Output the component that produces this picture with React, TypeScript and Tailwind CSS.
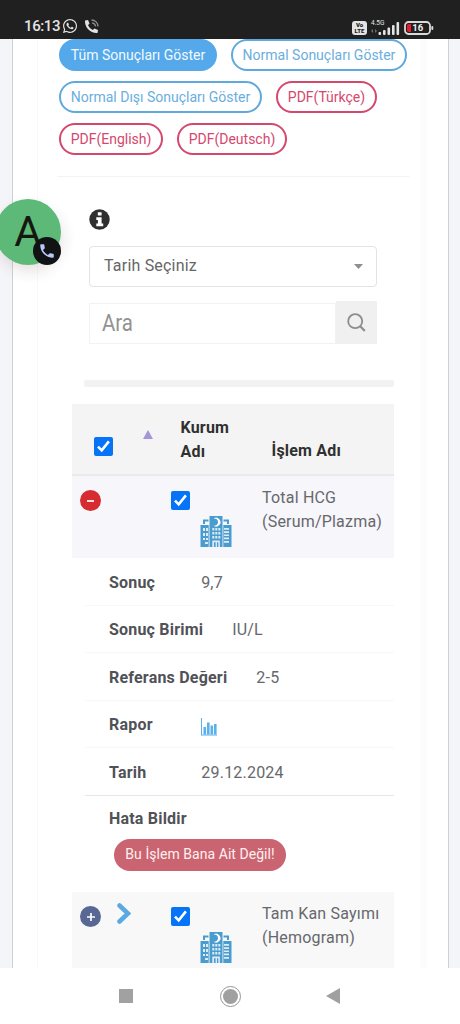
import type { ReactNode } from "react";
import { FaWhatsapp } from "react-icons/fa";
import { MdPhone } from "react-icons/md";

interface DetailRowProps {
  label: string;
  children: ReactNode;
  gap: string;
  divider?: string;
}

function StatusBar() {
  return (
    <header className="flex h-[39px] shrink-0 items-end bg-[#202020] pb-[5px] pr-[26px] pl-[24px] text-[#e4e4e4]">
      <span className="-mb-px w-[38px] text-[15px] leading-[18px] font-medium tracking-[-0.4px]">16:13</span>
      <FaWhatsapp className="size-4" />
      <svg className="ml-[6px] size-[15px]" viewBox="0 0 15 15">
        <path d="M1 1.500l3-.5 1.500 3.500L4 6.200a10 10 0 0 0 4.800 4.800l1.700-1.600 3.500 1.600-.5 3C6.500 14.500.5 8.500 1 1.500z" fill="#e4e4e4" />
        <path d="M7.500 1A6.500 6.500 0 0 1 14 7.500M8 3.800a4 4 0 0 1 3.600 3.600" fill="none" stroke="#8d8d8d" strokeWidth="1.300" />
      </svg>

      <div className="-mb-px ml-auto flex items-center">
        <div className="flex h-[14px] w-[15px] flex-col justify-center rounded-[3px] bg-[#e4e4e4] text-center text-[6px] leading-[6px] font-black text-[#202020]">
          <span>Vo</span>
          <span>LTE</span>
        </div>
        <svg className="-mt-[3px] ml-[3px] h-[16px] w-[30px]" viewBox="0 0 30 16" fill="#e4e4e4">
          <text x="1" y="5.500" fontSize="6.500" fontFamily="Roboto">4.5G</text>
          <path d="M1 12l2-2v4zM7 12l-2-2v4z" opacity=".4" />
          <rect x="8.500" y="13" width="2.600" height="3" rx="1" />
          <rect x="13" y="11" width="2.600" height="5" rx="1" />
          <rect x="17.500" y="8.500" width="2.600" height="7.500" rx="1" />
          <rect x="22" y="6" width="2.600" height="10" rx="1" />
          <rect x="26.500" y="3" width="2.600" height="13" rx="1" />
        </svg>
        <svg className="ml-[4px] h-[14px] w-[30px]" viewBox="0 0 30 14">
          <rect x="1" y="1" width="25" height="12" rx="3.5" fill="none" stroke="#d9d9d9" strokeWidth="1.8" />
          <path d="M5 3h2v8H5a2 2 0 0 1-2-2V5a2 2 0 0 1 2-2z" fill="#e51c2b" />
          <rect x="27.3" y="5" width="2" height="4" rx="1" fill="#d9d9d9" />
          <text x="8.2" y="10.4" fontSize="9.5" fontWeight="700" fontFamily="Roboto" fill="#f2f2f2">16</text>
        </svg>
      </div>
    </header>
  );
}

function FilterButtons() {
  const base = "flex h-8 items-center justify-center rounded-full border-2 text-[14px] whitespace-nowrap";
  const blue = "border-[#5fa9de] text-[#6aaee0]";
  const red = "border-[#d5486d] text-[#d5486d]";

  return (
    <div className="flex flex-wrap gap-x-[14px] gap-y-[10px] pl-[2px]">
      <button className={`${base} w-[158px] border-[#55a9ea] bg-[#55a9ea] text-[#f2f9ff]`}>Tüm Sonuçları Göster</button>
      <button className={`${base} ${blue} w-[176px]`}>Normal Sonuçları Göster</button>
      <button className={`${base} ${blue} w-[203px]`}>Normal Dışı Sonuçları Göster</button>
      <button className={`${base} ${red} w-[101px]`}>PDF(Türkçe)</button>
      <button className={`${base} ${red} w-[104px]`}>PDF(English)</button>
      <button className={`${base} ${red} w-[110px]`}>PDF(Deutsch)</button>
    </div>
  );
}

function InfoIcon() {
  return (
    <svg className="size-[21px]" viewBox="0 0 21 21">
      <circle cx="10.500" cy="10.500" r="10.200" fill="#2f2f2f" />
      <path d="M8.800 3.200h3.800v3.300H8.800zM7.300 8.300h5.300v6.200h1.600v2.700H7.300v-2.700h1.600v-3.600H7.300z" fill="#fff" />
    </svg>
  );
}

function CheckBox() {
  return (
    <svg className="size-[19px] shrink-0" viewBox="0 0 19 19">
      <rect width="19" height="19" rx="2" fill="#0574f7" />
      <path d="M4 9.7l3.7 3.7 7.2-9" fill="none" stroke="#fff" strokeWidth="2.6" />
    </svg>
  );
}

function HospitalIcon() {
  return (
    <svg className="h-[31px] w-8 shrink-0" viewBox="0 0 32 31">
      <path d="M9.500 0h13v31h-13zM.5 9h8.200v22H.5zM23.300 9h8.200v22h-8.200zM3 3.500h5.500v2H5V8H3zM29 3.500h-5.500v2H27V8h2z" fill="#4a9ccf" />
      <path d="M13.500 2.500a4.400 4.400 0 1 1 0 7.200 3.700 3.700 0 1 0 0-7.200z" fill="#fff" />
      <g fill="#dcecf7">
        <path d="M12.300 12h2v2.400h-2zM15.300 12h2v2.400h-2zM18.300 12h2v2.400h-2zM12.300 16h2v2.400h-2zM15.300 16h2v2.400h-2zM18.300 16h2v2.400h-2zM12.300 20h2v2.400h-2zM15.300 20h2v2.400h-2zM18.300 20h2v2.400h-2z" />
        <path d="M3 12h2v3H3zM6 12h2v3H6zM3 17h2v3H3zM6 17h2v3H6zM3 22h2v2H3zM6 22h2v2H6zM5 26h3v2H5z" />
        <path d="M24 12h5v1.700h-5zM24 15.200h5v1.700h-5zM24 18.400h5v1.700h-5zM24 21.600h5v1.700h-5zM24 25h5v1.700h-5z" />
        <path d="M12.300 24.500h7.600V31h-1.600v-4.800H17V31h-1.400v-4.800H14V31h-1.700z" />
      </g>
    </svg>
  );
}

function ChartIcon() {
  return (
    <svg className="mt-1 h-[18px] w-4" viewBox="0 0 16 18" fill="#5cb0ea">
      <path d="M0 0h1v16.500h15v1H0z" />
      <path d="M2.500 9h2.600v7.500H2.500zM6 4.500h2.600v12H6zM9.500 7.500h2.600v9H9.500zM13 6h2.600v10.500H13z" />
    </svg>
  );
}

function DetailRow({ label, children, gap, divider = "border-[#f7f7f8]" }: DetailRowProps) {
  return (
    <div className={`ml-[13px] flex h-[47.5px] items-center border-b pt-[3px] pl-6 ${divider}`}>
      <span className="font-bold text-[#505257]">{label}</span>
      <span className={gap}>{children}</span>
    </div>
  );
}

function ResultsTable() {
  return (
    <div className="ml-[15px] w-[322px] text-[16px] leading-[23.6px] tracking-[0.2px] text-[#66686c]">
      <div className="flex h-[72px] border-b-2 border-[#e9ebeb] bg-[#f4f4f4] text-[#303030]">
        <div className="pt-[33px] pl-[22px]">
          <CheckBox />
        </div>
        <svg className="mt-[26px] ml-[30px] h-[9px] w-[10px]" viewBox="0 0 10 9">
          <path d="M5 0l5 9H0z" fill="#a596d6" />
        </svg>
        <div className="mt-3 ml-[27.5px] w-[91px] font-bold">
          Kurum
          <br />
          Adı
        </div>
        <div className="mt-[35px] font-bold">İşlem Adı</div>
      </div>

      <div className="flex h-[82px] bg-[#f6f6fb]">
        <div className="mt-[14px] ml-[8px] flex size-[21px] items-center justify-center rounded-full bg-[#d52c31]">
          <span className="h-[2px] w-[7px] bg-[#f6dcd8]" />
        </div>
        <div className="mt-[15px] ml-[70px]">
          <CheckBox />
        </div>
        <div className="mt-[40px] ml-[10px]">
          <HospitalIcon />
        </div>
        <div className="mt-[10px] ml-[30px]">
          Total HCG
          <br />
          (Serum/Plazma)
        </div>
      </div>

      <div className="h-[334px]">
        <DetailRow label="Sonuç" gap="ml-[46px]">9,7</DetailRow>
        <DetailRow label="Sonuç Birimi" gap="ml-[29px]">IU/L</DetailRow>
        <DetailRow label="Referans Değeri" gap="ml-[29px]">2-5</DetailRow>
        <DetailRow label="Rapor" gap="ml-[48px]">
          <ChartIcon />
        </DetailRow>
        <DetailRow label="Tarih" gap="ml-[55px]" divider="border-[#e7e7e9]">29.12.2024</DetailRow>
        <div className="pt-[11.5px] pl-[37px] font-bold text-[#505257]">Hata Bildir</div>
        <button className="mt-[8px] ml-[42px] flex h-8 w-[172px] items-center justify-center rounded-full bg-[#cb6471] text-[14px] tracking-[0.05px] text-[#fff0f0]">
          Bu İşlem Bana Ait Değil!
        </button>
      </div>

      <div className="flex h-[76px] bg-[#f8f8f8]">
        <div className="mt-[14px] ml-[8px] flex size-[21px] items-center justify-center rounded-full bg-[#596795]">
          <svg className="size-2" viewBox="0 0 8 8" stroke="#fff" strokeWidth="1.7">
            <path d="M4 0v8M0 4h8" />
          </svg>
        </div>
        <svg className="mt-[11px] ml-[16px] h-[21px] w-[15px]" viewBox="0 0 15 21">
          <path d="M2.5 2.5l8.5 8-8.5 8" fill="none" stroke="#5aa9e2" strokeWidth="4.500" strokeLinecap="round" />
        </svg>
        <div className="mt-[15px] ml-[39px]">
          <CheckBox />
        </div>
        <div className="mt-[40px] ml-[10px]">
          <HospitalIcon />
        </div>
        <div className="mt-[10px] ml-[30px]">
          Tam Kan Sayımı
          <br />
          (Hemogram)
        </div>
      </div>
    </div>
  );
}

function CallBubble() {
  return (
    <div className="absolute top-[199px] -left-[5px] flex size-[66px] items-center justify-center rounded-full bg-[#5db978] shadow-[2px_7px_14px_rgba(90,50,50,0.14)]">
      <span className="text-[42px] leading-none text-[#14180f]">A</span>
      <div className="absolute top-[38px] left-[38px] flex size-7 items-center justify-center rounded-full bg-[#101214]">
        <MdPhone className="size-[18px] text-[#bcc6f8]" />
      </div>
    </div>
  );
}

function NavBar() {
  return (
    <nav className="flex h-14 shrink-0 items-center bg-white pl-[119px]">
      <div className="size-[14px] bg-[#a1a1a1]" />
      <div className="ml-[87px] flex size-[21px] items-center justify-center rounded-full border-[1.5px] border-[#969696]">
        <div className="size-[15px] rounded-full bg-[#a0a0a0]" />
      </div>
      <svg className="ml-[85px] h-[16px] w-[14px]" viewBox="0 0 14 16">
        <path d="M14 0v16L0 8z" fill="#a0a0a0" />
      </svg>
    </nav>
  );
}

export default function App() {
  return (
    <div className="relative flex h-[1024px] w-[460px] flex-col overflow-hidden bg-white font-[Roboto,sans-serif]">
      <StatusBar />

      <main className="h-[929px] shrink-0 overflow-hidden bg-[#f4f5f9] px-3">
        <div className="h-full w-[437px] border-x border-[#d0d1d5] bg-white pl-6">
          <div className="h-full w-[390px] border-l border-r-[7px] border-l-[#f8f8f8] border-r-[#fcfcfc] pl-[19px]">
            <div className="w-[352px]">
              <FilterButtons />
              <hr className="mt-[21px] border-[#f3f3f3]" />
            </div>

            <div className="mt-[32px] ml-8 w-[288px]">
              <InfoIcon />
              <div className="mt-[16px] flex h-[41px] items-center justify-between rounded-[4px] border-[1.5px] border-[#e3e3e3] pr-[13px] pb-[2px] pl-[14px] text-[16px] tracking-[0.2px] text-[#666]">
                Tarih Seçiniz
                <svg className="mt-[2px] h-[5px] w-[9px]" viewBox="0 0 9 5">
                  <path d="M0 0h9L4.500 5z" fill="#8e8e8e" />
                </svg>
              </div>
              <div className="mt-[14px] flex h-[43px] items-end">
                <div className="flex h-[41px] flex-1 items-center border border-[#f2f2f2] pl-3">
                  <span className="inline-block origin-left scale-x-[0.87] text-[23.5px] text-[#929292]">Ara</span>
                </div>
                <div className="flex h-[43px] w-[41px] items-center justify-center bg-[#f0f0f0]">
                  <svg className="size-[19px]" viewBox="0 0 19 19" fill="none" stroke="#8d8d8d">
                    <circle cx="8.200" cy="8.200" r="7" strokeWidth="1.8" />
                    <path d="M13 13l4.800 5" strokeWidth="2.200" />
                  </svg>
                </div>
              </div>
            </div>

            <div className="mt-[36px] ml-[27px] h-[7px] w-[310px] rounded-[2px] bg-[#f2f2f2]" />
            <div className="h-[17px]" />
            <ResultsTable />
          </div>
        </div>
      </main>

      <NavBar />
      <CallBubble />
    </div>
  );
}
